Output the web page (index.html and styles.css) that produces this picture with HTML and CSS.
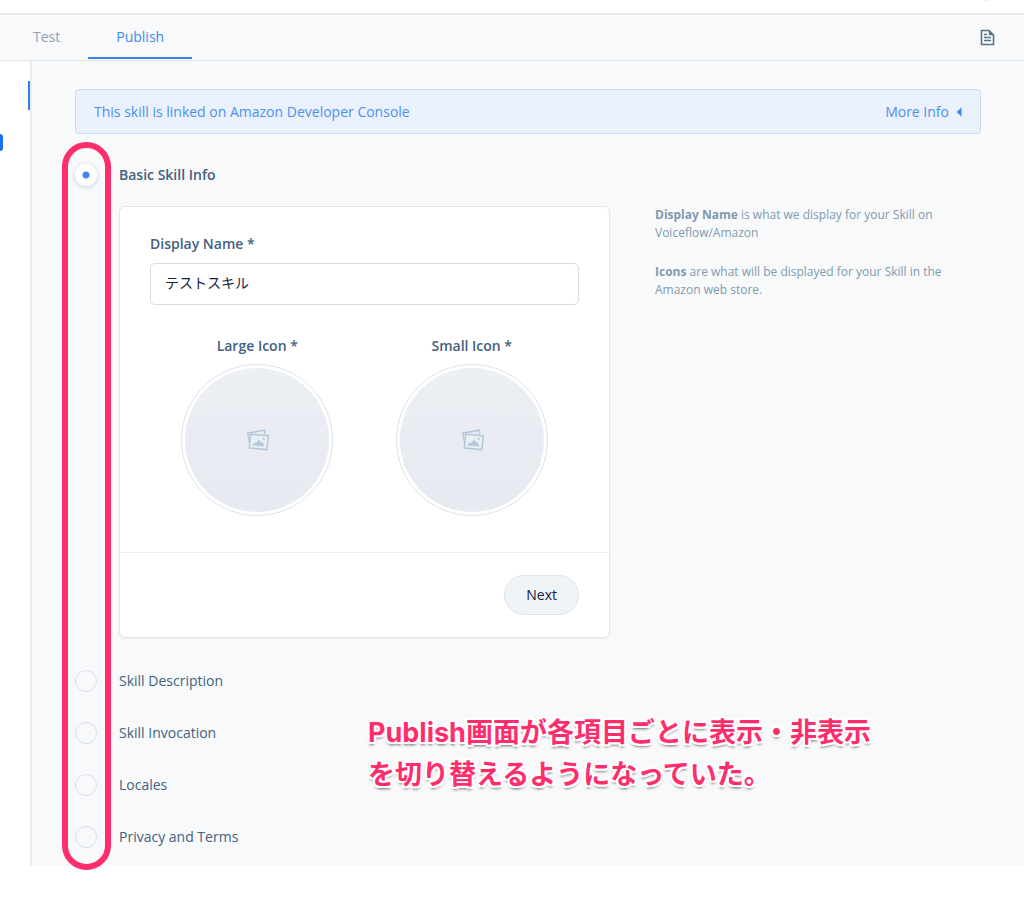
FILE: index.html
```html
<!DOCTYPE html>
<html lang="en">
<head>
  <meta charset="UTF-8">
  <meta name="viewport" content="width=device-width, initial-scale=1.0">
  <title>Publish</title>
  <link rel="stylesheet" href="styles.css">
</head>
<body>
<header class="topbar"><span class="topbar-dot"></span></header>
<nav class="tabs">
  <a class="tab" href="#test">Test</a>
  <a class="tab active" href="#publish">Publish</a>
  <button class="doc-button" type="button" aria-label="Documentation">
    <svg width="15" height="17" viewBox="0 0 15 17" fill="none" stroke="#5b738a">
      <path d="M1.5 1.5h7.5l4.5 4.5v9.5h-12z" stroke-width="1.6"/>
      <path d="M8.8 1v5.2h5.2z" fill="#5b738a" stroke="none"/>
      <path d="M4 5.5h3M4 8.5h7M4 11.5h7" stroke-width="1.3"/>
    </svg>
  </button>
</nav>

<div class="layout">
  <aside class="sidebar">
    <span class="sidebar-marker"></span>
    <span class="sidebar-badge"></span>
  </aside>
  <main class="content">
    <div class="callout">
      <span>This skill is linked on Amazon Developer Console</span>
      <button class="more-info" type="button">More Info
        <svg width="6" height="10" viewBox="0 0 6 10"><path d="M5.5 0.5v9L0.5 5z" fill="#3d8af0"/></svg>
      </button>
    </div>

    <form class="steps">
      <div class="step">
        <input type="radio" name="step" id="step-info" checked>
        <label class="current" for="step-info">Basic Skill Info</label>
      </div>
      <div class="step-body">
        <section class="card">
          <div class="card-main">
            <label class="field-label" for="display-name">Display Name *</label>
            <input class="text-input" type="text" id="display-name" value="テストスキル">
            <div class="icons">
              <div class="icon-field">
                <span class="field-label" id="large-icon">Large Icon *</span>
                <button class="upload" type="button" aria-labelledby="large-icon">
                  <svg width="24" height="24" viewBox="0 0 24 24" fill="none" stroke="#b4c8da" stroke-width="1.5">
                    <path d="M4.8 16.2L2.8 5.2L19.4 2.2L20.1 6"/>
                    <path d="M5.6 6.2L23.2 7.8L21.9 21.6L4.3 20z" fill="#ebeef3"/>
                    <path d="M7 17.4l3-3.2 1.2.9 2.8-3.6 2.2 3.3 1.3-1 1.9 4.6z" fill="#b4c8da" stroke="none"/>
                    <circle cx="18.7" cy="10.8" r="1.1" fill="#b4c8da" stroke="none"/>
                  </svg>
                </button>
              </div>
              <div class="icon-field">
                <span class="field-label" id="small-icon">Small Icon *</span>
                <button class="upload" type="button" aria-labelledby="small-icon">
                  <svg width="24" height="24" viewBox="0 0 24 24" fill="none" stroke="#b4c8da" stroke-width="1.5">
                    <path d="M4.8 16.2L2.8 5.2L19.4 2.2L20.1 6"/>
                    <path d="M5.6 6.2L23.2 7.8L21.9 21.6L4.3 20z" fill="#ebeef3"/>
                    <path d="M7 17.4l3-3.2 1.2.9 2.8-3.6 2.2 3.3 1.3-1 1.9 4.6z" fill="#b4c8da" stroke="none"/>
                    <circle cx="18.7" cy="10.8" r="1.1" fill="#b4c8da" stroke="none"/>
                  </svg>
                </button>
              </div>
            </div>
          </div>
          <div class="card-footer">
            <button class="next" type="button">Next</button>
          </div>
        </section>
        <div class="help">
          <p><strong>Display Name</strong> is what we display for your Skill on Voiceflow/Amazon</p>
          <p><strong>Icons</strong> are what will be displayed for your Skill in the Amazon web store.</p>
        </div>
      </div>
      <div class="step">
        <input type="radio" name="step" id="step-description">
        <label for="step-description">Skill Description</label>
      </div>
      <div class="step">
        <input type="radio" name="step" id="step-invocation">
        <label for="step-invocation">Skill Invocation</label>
      </div>
      <div class="step">
        <input type="radio" name="step" id="step-locales">
        <label for="step-locales">Locales</label>
      </div>
      <div class="step last">
        <input type="radio" name="step" id="step-privacy">
        <label for="step-privacy">Privacy and Terms</label>
      </div>
      <div class="highlight"></div>
      <p class="note" lang="ja">Publish画面が各項目ごとに表示・非表示<br>を切り替えるようになっていた。</p>
    </form>
  </main>
</div>
</body>
</html>
```
FILE: styles.css
```css
* {
  box-sizing: border-box;
}
body {
  min-height: 100vh;
  margin: 0;
  padding-bottom: 46px;
  background-color: #fff;
  color: #43617d;
  font-family: "Open Sans", "Noto Sans CJK JP", sans-serif;
  font-size: 14px;
  line-height: 22px;
}
button {
  font: inherit;
  padding: 0;
  border: 0;
  background: none;
  cursor: pointer;
}
.topbar {
  display: flex;
  justify-content: flex-end;
  align-items: flex-end;
  height: 13px;
  padding: 0 32px 12px;
  overflow: hidden;
}
.topbar-dot {
  flex: none;
  width: 12px;
  height: 12px;
  border-radius: 50%;
  background-color: #eef0f3;
}
.tabs {
  display: flex;
  height: 48px;
  padding: 0 29px 0 5px;
  background-color: #f7f9fb;
  border-top: 2px solid #e8ecf0;
  border-bottom: 1px solid #dfe4e9;
}
.tab {
  height: 44px;
  padding: 11px 28px 0;
  color: #8da2b5;
  text-decoration: none;
}
.tab.active {
  color: #3d8af0;
  border-bottom: 2px solid #3d82e2;
}
.doc-button {
  display: flex;
  align-items: center;
  height: 44px;
  margin-left: auto;
}
.layout {
  display: flex;
}
.sidebar {
  display: flex;
  flex-direction: column;
  flex: none;
  width: 32px;
  padding-top: 20px;
  border-right: 2px solid #e8edf2;
}
.sidebar-marker {
  align-self: flex-end;
  width: 2px;
  height: 29px;
  background-color: #2f80ed;
}
.sidebar-badge {
  width: 3px;
  height: 17px;
  margin-top: 24px;
  border-radius: 0 3px 3px 0;
  background-color: #1b6ef3;
}
.content {
  flex: 1;
  min-width: 0;
  padding: 28px 43px 18px;
  background-color: #f7f9fb;
}
.callout {
  display: flex;
  justify-content: space-between;
  align-items: center;
  height: 45px;
  margin-bottom: 30px;
  padding: 0 18px;
  border: 1px solid #c9dcf8;
  border-radius: 4px;
  background-color: #eaf1fb;
  color: #4a90f2;
}
.more-info {
  display: flex;
  align-items: center;
  gap: 7px;
  color: inherit;
}
.steps {
  position: relative;
}
.step {
  display: flex;
  align-items: center;
  gap: 22px;
  margin-bottom: 30px;
}
.step.last {
  margin-bottom: 0;
}
.step input {
  appearance: none;
  width: 22px;
  height: 22px;
  margin: 0;
  border: 1px solid #dcdfea;
  border-radius: 50%;
}
.step input:checked {
  border: 0;
  background: radial-gradient(circle, #3f86ea 3px, #fff 4px);
  box-shadow: 0 1px 4px rgba(30, 60, 100, 0.22);
}
.step .current {
  color: #43617d;
  font-weight: 600;
}
.step-body {
  display: flex;
  align-items: flex-start;
  gap: 45px;
  margin: -10px 0 32px;
  padding-left: 44px;
}
.card {
  flex: 0 1 491px;
  border: 1px solid #e1e6eb;
  border-radius: 6px;
  background-color: #fff;
  box-shadow: 0 1px 2px rgba(30, 60, 100, 0.06);
}
.card-main {
  padding: 26px 30px 36px;
}
.field-label {
  display: block;
  font-weight: 600;
}
.text-input {
  display: block;
  width: 100%;
  height: 42px;
  margin: 8px 0 30px;
  padding: 0 14px 4px;
  border: 1px solid #d4dde6;
  border-radius: 5px;
  background-color: #fff;
  color: #132144;
  font: inherit;
}
.icons {
  display: grid;
  grid-template-columns: 1fr 1fr;
}
.icon-field {
  display: flex;
  flex-direction: column;
  align-items: center;
  gap: 7px;
}
.upload {
  display: flex;
  align-items: center;
  justify-content: center;
  width: 152px;
  height: 152px;
  padding: 3px;
  border: 1px solid #dfe2ec;
  border-radius: 50%;
  background: linear-gradient(#eceff4, #e6eaf1) content-box;
}
.card-footer {
  display: flex;
  justify-content: flex-end;
  padding: 22px 30px;
  border-top: 1px solid #eaeef2;
}
.next {
  padding: 8px 21px;
  border: 1px solid #dde2ec;
  border-radius: 20px;
  background-color: #eff4f7;
  color: #132144;
}
.help {
  flex: 1;
  min-width: 0;
  color: #8299ae;
  font-size: 12px;
  line-height: 18px;
}
.help p {
  margin: 0 0 21px;
}
.highlight {
  position: absolute;
  top: -22px;
  bottom: -22px;
  left: -13px;
  width: 49px;
  border: 6px solid #ff2d6c;
  border-radius: 25px;
  pointer-events: none;
}
.note {
  position: absolute;
  bottom: 52px;
  left: 293px;
  margin: 0;
  color: #ff2d6c;
  font-family: Inter, "Noto Sans CJK JP", sans-serif;
  font-size: 27px;
  font-weight: bold;
  line-height: 42px;
  white-space: nowrap;
  text-shadow: 2px 0 #fff, -2px 0 #fff, 0 2px #fff, 0 -2px #fff,
    2px 2px #fff, -2px 2px #fff, 2px -2px #fff, -2px -2px #fff,
    0 3px 3px rgba(0, 0, 0, 0.6);
}
```
